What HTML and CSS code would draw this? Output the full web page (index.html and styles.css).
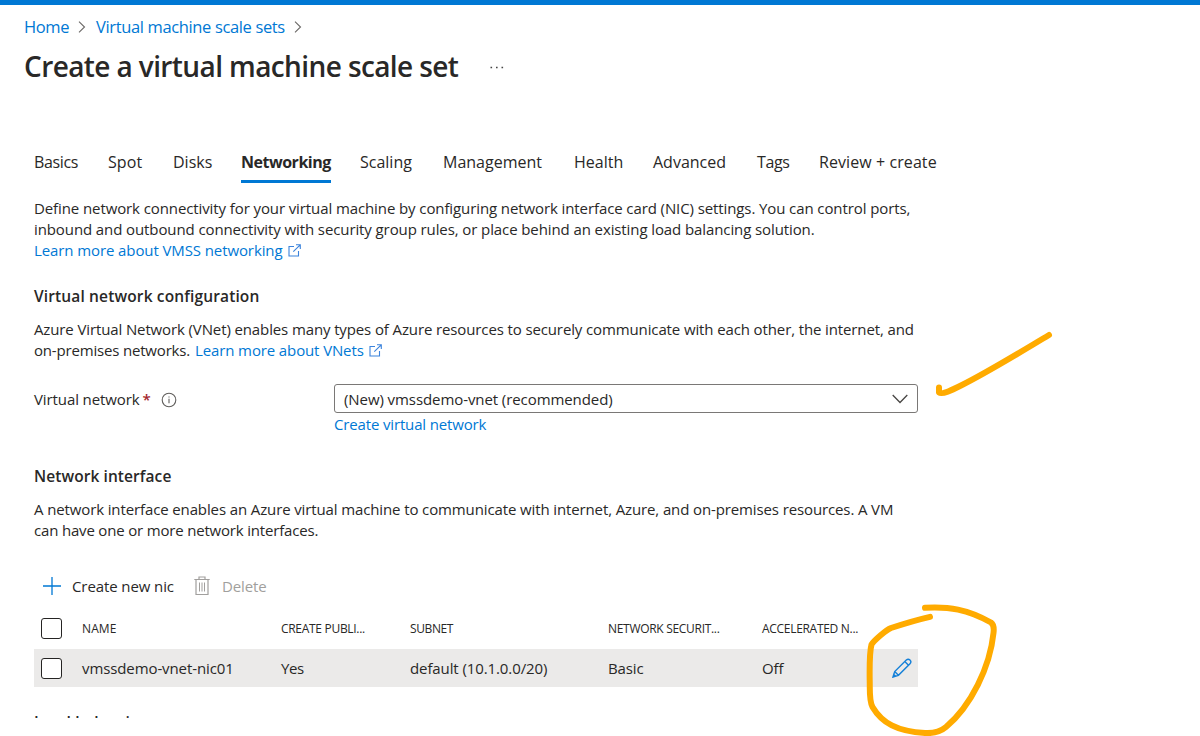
FILE: index.html
```html
<!DOCTYPE html>
<html lang="en">
<head>
<meta charset="utf-8">
<title>Create a virtual machine scale set</title>
<link rel="stylesheet" href="styles.css">
</head>
<body>
<div class="topbar"></div>
<nav class="breadcrumb">
  <a class="link crumb-home">Home</a>
  <svg class="sep" width="8" height="12" viewBox="0 0 8 12"><path d="M1 .7 6.500 6 1 11.300"/></svg>
  <a class="link crumb-sets">Virtual machine scale sets</a>
  <svg class="sep" width="8" height="12" viewBox="0 0 8 12"><path d="M1 .7 6.500 6 1 11.300"/></svg>
</nav>
<header class="header">
  <h1 class="title">Create a virtual machine scale set</h1>
  <svg class="more" width="14" height="3" viewBox="0 0 14 3"><path d="M.5.7h1.600v1.600H.5zM6 .7h1.600v1.600H6zM11.500 .7h1.600v1.600h-1.600z"/></svg>
</header>
<main class="content">
  <div class="tabs">
    <span class="tab tab-tight">Basics</span>
    <span class="tab tab-wide">Spot</span>
    <span class="tab">Disks</span>
    <span class="tab tab-active">Networking</span>
    <span class="tab">Scaling</span>
    <span class="tab">Management</span>
    <span class="tab">Health</span>
    <span class="tab">Advanced</span>
    <span class="tab tab-tight">Tags</span>
    <span class="tab tab-wide">Review + create</span>
  </div>

  <p class="text intro">Define network connectivity for your virtual machine by configuring network interface card (NIC) settings. You can control ports,<br>
  inbound and outbound connectivity with security group rules, or place behind an existing load balancing solution.<br>
  <a class="link">Learn more about VMSS networking</a><svg class="ext" width="13" height="13" viewBox="0 0 13 13"><path d="M6 2.500H1v9.500h9.500V7M8 .7h4.300V5M12.200 .8 5.300 7.700"/></svg></p>

  <h2 class="section">Virtual network configuration</h2>
  <p class="text text-tight">Azure Virtual Network (VNet) enables many types of Azure resources to securely communicate with each other, the internet, and<br>
  <span class="lead">on-premises networks.</span><a class="link">Learn more about VNets</a><svg class="ext" width="13" height="13" viewBox="0 0 13 13"><path d="M6 2.500H1v9.500h9.500V7M8 .7h4.300V5M12.200 .8 5.300 7.700"/></svg></p>

  <div class="field">
    <div class="label">Virtual network<span class="required">*</span>
      <svg class="info" width="16" height="16" viewBox="0 0 16 16"><circle cx="8" cy="8" r="6.800"/><path d="M8 6.700v4.600M8 4.400v1.200"/></svg>
    </div>
    <div class="control">
      <div class="select"><span class="value">(New) vmssdemo-vnet (recommended)</span>
        <svg class="chevron" width="16" height="10" viewBox="0 0 16 10"><path d="M.7 1 8 8.500 15.300 1"/></svg>
      </div>
      <a class="link create-link">Create virtual network</a>
    </div>
  </div>

  <h2 class="section section-nic">Network interface</h2>
  <p class="text text-tight">A network interface enables an Azure virtual machine to communicate with internet, Azure, and on-premises resources. A VM<br>
  <span class="lead">can have one or more network interfaces.</span></p>

  <div class="toolbar">
    <svg class="plus" width="18" height="18" viewBox="0 0 18 18"><path d="M9 0v18M0 9h18"/></svg>
    <span class="command">Create new nic</span>
    <svg class="trash" width="16" height="20" viewBox="0 0 16 20"><path d="M.3 3.500h15.400M5 3.300V1h6v2.300M2 3.500v15h12v-15"/><path class="bars" d="M5.500 6.500v9M8 6.500v9M10.500 6.500v9"/></svg>
    <span class="disabled">Delete</span>
  </div>

  <div class="grid">
    <div class="row head">
      <span class="checkbox"></span>
      <span class="name-head">NAME</span><span>CREATE PUBLI...</span><span class="subnet-head">SUBNET</span><span>NETWORK SECURIT...</span><span>ACCELERATED N...</span>
    </div>
    <div class="row item">
      <span class="checkbox"></span>
      <span>vmssdemo-vnet-nic01</span><span class="yes">Yes</span><span>default (10.1.0.0/20)</span><span>Basic</span><span>Off</span>
      <svg class="pencil" width="20" height="20" viewBox="0 0 20 20"><path d="M1 19 2.700 13.600 14.300 2C16.800-.3 20.400 3.200 18 5.700L6.400 17.300zM2.700 13.600 6.400 17.300M12.800 3.500l3.700 3.700M1 19l2.600-.8-1.800-1.800z"/></svg>
    </div>
  </div>
  <div class="cutoff"><h2 class="section">Load balancing</h2></div>
</main>

<svg class="annotations" width="1200" height="736" viewBox="0 0 1200 736">
  <path d="M939 387.500V392.500C942 395 952 390 961 385.500C988 372 1018 353.500 1049 335"/>
  <path d="M925 607.800C949 606.500 967 609 991 622.500Q994.500 625 993.500 633C990 667 971 706 946 727C940 732 933 733.500 925 733C897 731.500 882 723 872.500 707C869 701 870 690 869.700 680C869.500 666 869.500 652 871.500 644.500C874 640.500 886 630 891 628C903 624 916 620 930 616.800"/>
</svg>
</body>
</html>
```
FILE: styles.css
```css
* { box-sizing: border-box; }
body {
  margin: 0;
  height: 736px;
  overflow: hidden;
  background: #fff;
  color: #292827;
  font: 15px/21px "Open Sans", "Noto Sans", sans-serif;
  letter-spacing: -0.1px;
  white-space: nowrap;
}
h1, h2, p { margin: 0; }
svg { fill: none; flex: none; }
.link { color: #0078d4; }
.topbar { height: 5px; background: #0078d4; }

.breadcrumb {
  display: flex;
  align-items: center;
  height: 43px;
  padding-left: 24px;
  font-size: 16.5px;
}
.crumb-home { width: 54px; letter-spacing: -0.4px; }
.crumb-sets { width: 198px; margin-left: 10px; letter-spacing: -0.36px; }
.sep { margin-top: 1px; stroke: #6b6967; stroke-width: 1.1; }

.header { display: flex; align-items: center; height: 36px; padding-left: 24px; }
.title { width: 466px; font-size: 28px; font-weight: 600; line-height: 36px; letter-spacing: -0.6px; }
.more { margin-top: 2px; fill: #444; }

.content { padding: 58px 0 0 34px; }
.tabs {
  display: grid;
  grid-template-columns: 74px 65px 68px 119px 83px 131px 79px 104px 62px auto;
  justify-items: start;
  height: 41px;
  font-size: 16px;
  letter-spacing: 0;
}
.tab { height: 41px; line-height: 40px; }
.tab-tight { letter-spacing: -0.35px; }
.tab-wide { letter-spacing: 0.08px; }
.tab-active { border-bottom: 3px solid #0078d4; font-weight: 700; letter-spacing: -0.48px; }

.intro { margin-top: 15px; }
.text-tight { letter-spacing: -0.12px; }
.lead { letter-spacing: -0.18px; margin-right: 5px; }
.ext { margin-left: 5px; vertical-align: -1px; stroke: #3b83dc; stroke-width: 1.1; }

.section { margin: 25px 0 12px; font-size: 15.5px; font-weight: 600; letter-spacing: 0.14px; }

.field { display: grid; grid-template-columns: 300px 584px; margin-top: 23px; }
.label { display: flex; align-items: center; height: 29px; padding-top: 2px; }
.required { margin-left: 3px; color: #a4262c; font-weight: 600; }
.info { margin-left: 10px; stroke: #605e5c; stroke-width: 1.1; }
.select {
  display: flex;
  align-items: center;
  justify-content: space-between;
  height: 29px;
  margin-bottom: 1px;
  padding: 0 9px;
  border: 1px solid #7a7876;
  border-radius: 3px;
}
.value { padding-top: 2px; letter-spacing: -0.08px; }
.chevron { stroke: #484644; stroke-width: 1.3; }
.create-link { letter-spacing: -0.15px; }
.section-nic { margin-top: 31px; letter-spacing: 0.08px; }

.toolbar { display: flex; align-items: center; height: 24px; margin-top: 33px; padding-left: 9px; }
.plus { margin-top: -1px; stroke: #0078d4; stroke-width: 1.3; }
.command { width: 122px; margin-left: 11px; }
.trash { stroke: #a19f9d; stroke-width: 1.2; }
.trash .bars { stroke-width: 1; }
.disabled { margin-left: 12px; color: #a19f9d; }

.grid { width: 884px; margin-top: 9px; }
.row {
  display: grid;
  grid-template-columns: 40px 199px 129px 198px 154px 130px auto;
  align-items: center;
  padding-left: 8px;
}
.head { height: 42px; font-size: 12px; letter-spacing: -0.3px; }
.name-head { letter-spacing: 0.1px; }
.subnet-head { letter-spacing: -0.4px; }
.item { height: 38px; background: #ebeae9; }
.yes { letter-spacing: -0.45px; }
.checkbox { width: 21px; height: 21px; margin-left: -1px; border: 1px solid #252423; border-radius: 3px; background: #fff; }
.pencil { stroke: #1580d8; stroke-width: 1.4; }

/* Next section, clipped by the bottom edge of the scroll area */
.cutoff { height: 31px; overflow: hidden; }
.cutoff .section { margin: 25px 0 0; }

.annotations {
  position: absolute;
  top: 0;
  left: 0;
  stroke: #ffab00;
  stroke-width: 6;
  stroke-linecap: round;
  stroke-linejoin: round;
  pointer-events: none;
}
```
